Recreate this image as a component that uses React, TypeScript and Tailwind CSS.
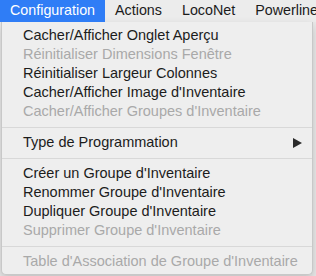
import React from "react";

type Item = { label: string; disabled?: boolean; submenu?: boolean } | "sep";

const items: Item[] = [
  { label: "Cacher/Afficher Onglet Aperçu" },
  { label: "Réinitialiser Dimensions Fenêtre", disabled: true },
  { label: "Réinitialiser Largeur Colonnes" },
  { label: "Cacher/Afficher Image d'Inventaire" },
  { label: "Cacher/Afficher Groupes d'Inventaire", disabled: true },
  "sep",
  { label: "Type de Programmation", submenu: true },
  "sep",
  { label: "Créer un Groupe d'Inventaire" },
  { label: "Renommer Groupe d'Inventaire" },
  { label: "Dupliquer Groupe d'Inventaire" },
  { label: "Supprimer Groupe d'Inventaire", disabled: true },
  "sep",
  { label: "Table d'Association de Groupe d'Inventaire", disabled: true },
];

const menus = ["Configuration", "Actions", "LocoNet", "Powerline"];

export default function App() {
  return (
    <div
      className="w-[316px] h-[276px] overflow-hidden bg-[#e9e9e9]"
      style={{ fontFamily: '"Liberation Sans", Arial, sans-serif' }}
    >
      {/* menu bar */}
      <div className="flex h-[22px] items-center bg-[#ececec] whitespace-nowrap text-[14.3px]">
        {menus.map((m, i) => (
          <div
            key={m}
            className={
              i === 0
                ? "h-full flex items-center px-[10px] bg-[#2f7df6] text-white"
                : "h-full flex items-center px-[10px] text-[#1b1b1b]"
            }
          >
            {m}
          </div>
        ))}
      </div>

      {/* dropdown */}
      <div className="ml-px w-[312px] bg-[#eeeeee] border border-t-0 border-[#c8c8c8] rounded-b-[5px] pt-[4px] pb-[3px] text-[14.5px] shadow-[0_4px_10px_rgba(0,0,0,0.18)]">
        {items.map((it, i) =>
          it === "sep" ? (
            <div key={i} className="h-[12px] flex items-center">
              <div className="w-full h-px bg-[#d8d8d8]" />
            </div>
          ) : (
            <div
              key={i}
              className={`h-[19px] flex items-center justify-between pl-[21px] pr-[10px] whitespace-nowrap ${
                it.disabled ? "text-[#a9a9a9]" : "text-[#1c1c1c]"
              }`}
            >
              <span>{it.label}</span>
              {it.submenu && (
                <svg width="9" height="10" viewBox="0 0 9 10">
                  <path d="M0 0 L9 5 L0 10 Z" fill="#2a2a2a" />
                </svg>
              )}
            </div>
          )
        )}
      </div>
    </div>
  );
}
